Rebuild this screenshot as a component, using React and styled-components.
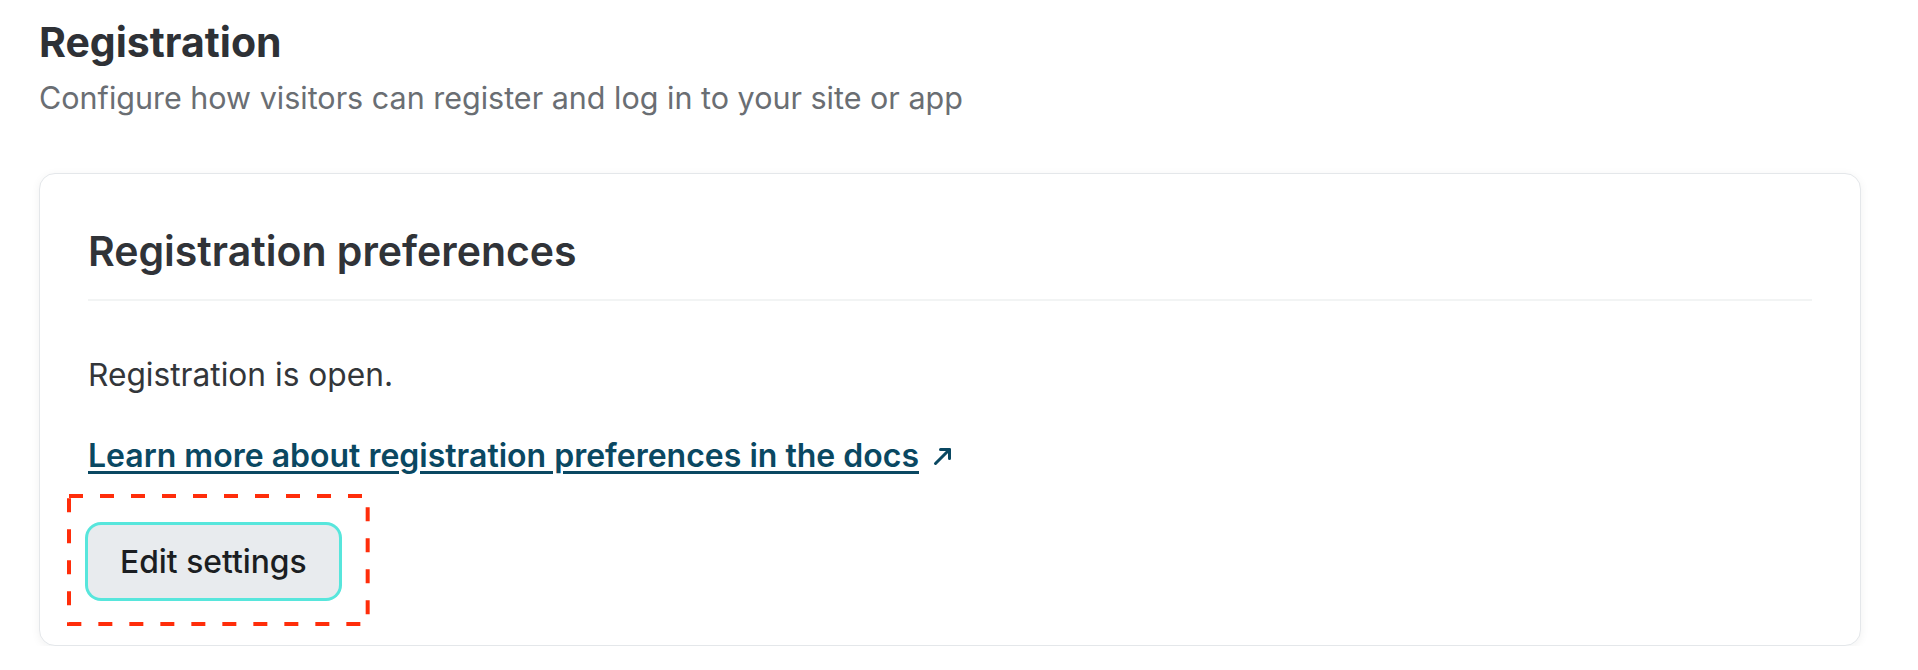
import React from 'react';
import styled, { createGlobalStyle } from 'styled-components';

const GlobalStyle = createGlobalStyle`
  body {
    margin: 0;
    background: #ffffff;
    font-family: Inter, "Noto Sans", "Liberation Sans", sans-serif;
    -webkit-font-smoothing: antialiased;
  }
`;

const Page = styled.div`
  padding: 18px 57px 0 39px;
`;

const Title = styled.h1`
  margin: 0;
  font-size: 41px;
  line-height: 48px;
  font-weight: 700;
  color: #2e3136;
`;

const Subtitle = styled.p`
  margin: 14px 0 0;
  font-size: 30.5px;
  line-height: 36px;
  font-weight: 400;
  color: #6a6e73;
`;

const Card = styled.section`
  margin-top: 57px;
  background: #ffffff;
  border: 1px solid #e4e7ea;
  border-radius: 16px;
  box-shadow: 0 2px 10px rgba(20, 30, 40, 0.06);
  padding: 53px 48px 47px;
`;

const CardHeader = styled.div`
  padding-bottom: 24px;
  border-bottom: 2px solid #f2f4f4;
`;

const CardTitle = styled.h2`
  margin: 0;
  font-size: 41px;
  line-height: 48px;
  font-weight: 600;
  color: #303338;
`;

const Status = styled.p`
  margin: 54px 0 0;
  font-size: 31.7px;
  line-height: 40px;
  color: #33363a;
`;

const DocsLink = styled.a`
  display: inline-flex;
  align-items: center;
  gap: 14px;
  margin-top: 41px;
  font-size: 32px;
  line-height: 40px;
  font-weight: 600;
  color: #0a4862;
  text-decoration: none;

  span {
    text-decoration: underline;
    text-decoration-thickness: 3px;
    text-underline-offset: 4px;
  }
`;

const Actions = styled.div`
  margin-top: 49px;
`;

const Highlight = styled.div`
  position: relative;
  display: inline-block;
`;

const DashedBox = styled.svg`
  position: absolute;
  top: -31px;
  left: -21px;
  width: calc(100% + 52px);
  height: calc(100% + 59px);
  overflow: visible;
  pointer-events: none;
`;

const Button = styled.button`
  height: 73px;
  padding: 0 32px 0 32px;
  border: none;
  border-radius: 13px;
  background: #e8ebee;
  box-shadow: 0 0 0 3px #57e6dc;
  font-family: inherit;
  font-size: 31.8px;
  font-weight: 500;
  color: #1b1e22;
  cursor: pointer;
`;

const ExternalArrow = () => (
  <svg width="20" height="20" viewBox="0 0 20 20" fill="none">
    <path d="M2.5 17.5 L16.5 3.5" stroke="currentColor" strokeWidth="3" strokeLinecap="round" />
    <path d="M7.5 3.5 H16.5 V12.5" stroke="currentColor" strokeWidth="3" strokeLinecap="round" strokeLinejoin="round" />
  </svg>
);

export default function App() {
  return (
    <>
      <GlobalStyle />
      <Page>
        <Title>Registration</Title>
        <Subtitle>Configure how visitors can register and log in to your site or app</Subtitle>
        <Card>
          <CardHeader>
            <CardTitle>Registration preferences</CardTitle>
          </CardHeader>
          <Status>Registration is open.</Status>
          <DocsLink href="#">
            <span>Learn more about registration preferences in the docs</span>
            <ExternalArrow />
          </DocsLink>
          <Actions>
            <Highlight>
              <Button>Edit settings</Button>
              <DashedBox preserveAspectRatio="none">
                <rect
                  x="2"
                  y="2"
                  width="calc(100% - 4px)"
                  height="calc(100% - 4px)"
                  fill="none"
                  stroke="#ff2d0a"
                  strokeWidth="4"
                  strokeDasharray="14 17"
                />
              </DashedBox>
            </Highlight>
          </Actions>
        </Card>
      </Page>
    </>
  );
}
